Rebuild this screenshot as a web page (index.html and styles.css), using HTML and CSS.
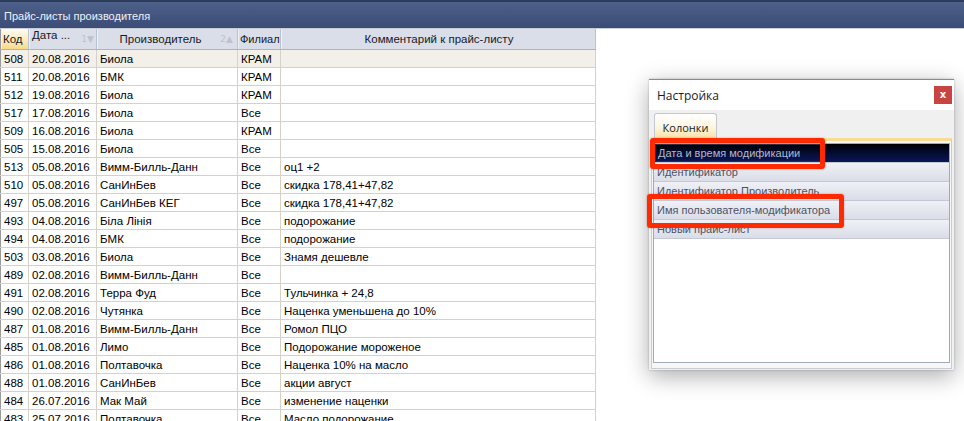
FILE: index.html
```html
<!DOCTYPE html>
<html lang="ru">
<head>
<meta charset="utf-8">
<title>Прайс-листы производителя</title>
<link rel="stylesheet" href="styles.css">
</head>
<body>
<div class="titlebar">Прайс-листы производителя</div>
<table class="grid">
  <colgroup><col class="c-code"><col class="c-date"><col class="c-prod"><col class="c-fil"><col class="c-com"></colgroup>
  <thead>
    <tr>
      <th class="hot">Код</th>
      <th><span class="hl">Дата ...</span><span class="sort">1▼</span></th>
      <th class="center sorted"><span>Производитель</span><span class="sort">2▲</span></th>
      <th class="tight">Филиал</th>
      <th class="center">Комментарий к прайс-листу</th>
    </tr>
  </thead>
  <tbody>
    <tr class="focus"><td>508</td><td>20.08.2016</td><td>Биола</td><td>КРАМ</td><td></td></tr>
    <tr><td>511</td><td>20.08.2016</td><td>БМК</td><td>КРАМ</td><td></td></tr>
    <tr><td>512</td><td>19.08.2016</td><td>Биола</td><td>КРАМ</td><td></td></tr>
    <tr><td>517</td><td>17.08.2016</td><td>Биола</td><td>Все</td><td></td></tr>
    <tr><td>509</td><td>16.08.2016</td><td>Биола</td><td>КРАМ</td><td></td></tr>
    <tr><td>505</td><td>15.08.2016</td><td>Биола</td><td>Все</td><td></td></tr>
    <tr><td>513</td><td>05.08.2016</td><td>Вимм-Билль-Данн</td><td>Все</td><td>оц1 +2</td></tr>
    <tr><td>510</td><td>05.08.2016</td><td>СанИнБев</td><td>Все</td><td>скидка 178,41+47,82</td></tr>
    <tr><td>497</td><td>05.08.2016</td><td>СанИнБев КЕГ</td><td>Все</td><td>скидка 178,41+47,82</td></tr>
    <tr><td>493</td><td>04.08.2016</td><td>Біла Лінія</td><td>Все</td><td>подорожание</td></tr>
    <tr><td>494</td><td>04.08.2016</td><td>БМК</td><td>Все</td><td>подорожание</td></tr>
    <tr><td>503</td><td>03.08.2016</td><td>Биола</td><td>Все</td><td>Знамя дешевле</td></tr>
    <tr><td>489</td><td>02.08.2016</td><td>Вимм-Билль-Данн</td><td>Все</td><td></td></tr>
    <tr><td>491</td><td>02.08.2016</td><td>Терра Фуд</td><td>Все</td><td>Тульчинка + 24,8</td></tr>
    <tr><td>490</td><td>02.08.2016</td><td>Чутянка</td><td>Все</td><td>Наценка уменьшена до 10%</td></tr>
    <tr><td>487</td><td>01.08.2016</td><td>Вимм-Билль-Данн</td><td>Все</td><td>Ромол ПЦО</td></tr>
    <tr><td>485</td><td>01.08.2016</td><td>Лимо</td><td>Все</td><td>Подорожание мороженое</td></tr>
    <tr><td>486</td><td>01.08.2016</td><td>Полтавочка</td><td>Все</td><td>Наценка 10% на масло</td></tr>
    <tr><td>488</td><td>01.08.2016</td><td>СанИнБев</td><td>Все</td><td>акции август</td></tr>
    <tr><td>484</td><td>26.07.2016</td><td>Мак Май</td><td>Все</td><td>изменение наценки</td></tr>
    <tr><td>483</td><td>25.07.2016</td><td>Полтавочка</td><td>Все</td><td>Масло подорожание</td></tr>
  </tbody>
</table>

<div class="dialog">
  <div class="dlg-head">
    <span class="dlg-title">Настройка</span>
    <span class="dlg-close">x</span>
  </div>
  <div class="dlg-body">
    <div class="tabs"><span class="tab">Колонки</span></div>
    <div class="panel">
      <div class="listbox">
        <div class="item selected"><span class="focusrect">Дата и время модификации</span></div>
        <div class="item">Идентификатор</div>
        <div class="item">Идентификатор Производитель</div>
        <div class="item">Имя пользователя-модификатора</div>
        <div class="item">Новый прайс-лист</div>
      </div>
    </div>
  </div>
</div>

<div class="mark mark-1"></div>
<div class="mark mark-2"></div>
</body>
</html>
```
FILE: styles.css
```css
* { box-sizing: border-box; }
html, body { margin: 0; padding: 0; background: #fff; }
body {
  width: 964px;
  height: 421px;
  overflow: hidden;
  position: relative;
  font-family: "Liberation Sans", Arial, sans-serif;
  font-size: 11.5px;
  color: #000;
}

.titlebar {
  height: 29px;
  padding: 8px 0 0 4px;
  background: linear-gradient(#4d608a, #3b4d76);
  border-top: 2px solid #2e3c5c;
  border-bottom: 1px solid #c9cfd9;
  color: #eef1f8;
  font-size: 11px;
}

.grid {
  border-collapse: collapse;
  table-layout: fixed;
  width: 595px;
  border-left: 1px solid #9a9a9a;
}
.c-code { width: 28px; }
.c-date { width: 68px; }
.c-prod { width: 141px; }
.c-fil { width: 43px; }
.c-com { width: 315px; }

.grid th {
  height: 20px;
  padding: 0 1px 0 3px;
  font-weight: normal;
  font-size: 11.5px;
  text-align: left;
  white-space: nowrap;
  overflow: hidden;
  color: #1a1a24;
  background: #d9dee8;
  border-bottom: 1px solid #a8b3c7;
  border-right: 1px solid #b9c2d2;
  box-shadow: inset 1px 0 0 #eef1f6;
}
.grid th.tight { padding-left: 2px; padding-right: 0; font-size: 11px; }
.grid th.hot {
  background: linear-gradient(#fdfbf2 0%, #fbe9b8 60%, #f6d888 100%);
  padding-left: 2px;
}
.grid th.center { text-align: center; position: relative; }
.grid th.sorted { padding-right: 16px; }
.grid th .sort {
  float: right;
  color: #bcc2ce;
  font-family: "DejaVu Sans", sans-serif;
  font-size: 9px;
  line-height: 20px;
  margin-right: 1px;
}
.grid th.center .sort { position: absolute; right: 3px; top: 0; }

.grid td {
  height: 18px;
  padding: 0 1px 0 3px;
  white-space: nowrap;
  overflow: hidden;
  border-bottom: 1px solid #d6d2ca;
  border-right: 1px solid #d6d2ca;
}
.grid td:first-child { padding-left: 3px; }
.grid tr.focus td { background: #f3f0ea; }

/* dialog window */
.dialog {
  position: absolute;
  left: 649px;
  top: 79px;
  width: 305px;
  height: 291px;
  background: #f0f0f0;
  border-top: 1px solid #4a9be0;
  box-shadow: 0 6px 22px rgba(0, 0, 0, 0.33), 0 0 2px rgba(0, 0, 0, 0.25);
  display: flex;
  flex-direction: column;
  font-family: "Open Sans", "Noto Sans", sans-serif;
}
.dlg-head {
  height: 30px;
  background: #fff;
  display: flex;
  align-items: center;
  justify-content: space-between;
  padding: 0 2px 0 8px;
}
.dlg-title { font-size: 12px; color: #1b1b1b; margin-top: 1px; }
.dlg-close {
  width: 18px;
  height: 18px;
  background: #c94343;
  color: #fff;
  font-family: "DejaVu Sans", sans-serif;
  font-size: 10px;
  font-weight: bold;
  display: flex;
  align-items: center;
  justify-content: center;
  padding-bottom: 2px;
}
.dlg-body {
  flex: 1;
  display: flex;
  flex-direction: column;
  padding: 3px 2px 1px 2px;
}
.tabs { display: flex; padding-left: 3px; }
.tab {
  height: 25px;
  width: 63px;
  border: 1px solid #c3c8d0;
  border-bottom: none;
  border-radius: 3px 3px 0 0;
  background: linear-gradient(#ffffff 0%, #fdf6e1 55%, #fbe3a4 100%);
  font-size: 11px;
  color: #222;
  display: flex;
  align-items: center;
  justify-content: center;
  padding-top: 2px;
}
.panel {
  flex: 1;
  border: 1px solid #c8ccd4;
  border-top: 3px solid #f8dc94;
  background: #f7f7f8;
  padding: 2px 1px 5px 1px;
  display: flex;
}
.listbox {
  flex: 1;
  background: #fff;
  border: 1px solid #9ea9bb;
}
.item {
  height: 19px;
  padding-left: 3px;
  font-family: "Liberation Sans", Arial, sans-serif;
  font-size: 11px;
  line-height: 18px;
  color: #4d5266;
  background: linear-gradient(#eff1f6, #dadde7);
  border-bottom: 1px solid #c3c8d5;
  white-space: nowrap;
}
.item.selected {
  background: linear-gradient(#000000 0%, #040b30 45%, #0b1657 100%);
  color: #b5b9c9;
  padding-left: 1px;
}
.focusrect {
  display: inline-block;
  height: 18px;
  padding: 0 22px 0 2px;
  border: 1px solid #2b2f44;
  line-height: 16px;
}

/* red annotation boxes drawn over the screenshot */
.mark {
  position: absolute;
  border: 5px solid #ff2a00;
  border-radius: 3px;
  box-shadow: 0 0 2px rgba(120, 0, 0, 0.4);
}
.mark-1 { left: 650px; top: 138px; width: 175px; height: 31px; }
.mark-2 { left: 647px; top: 194px; width: 197px; height: 34px; }
```
